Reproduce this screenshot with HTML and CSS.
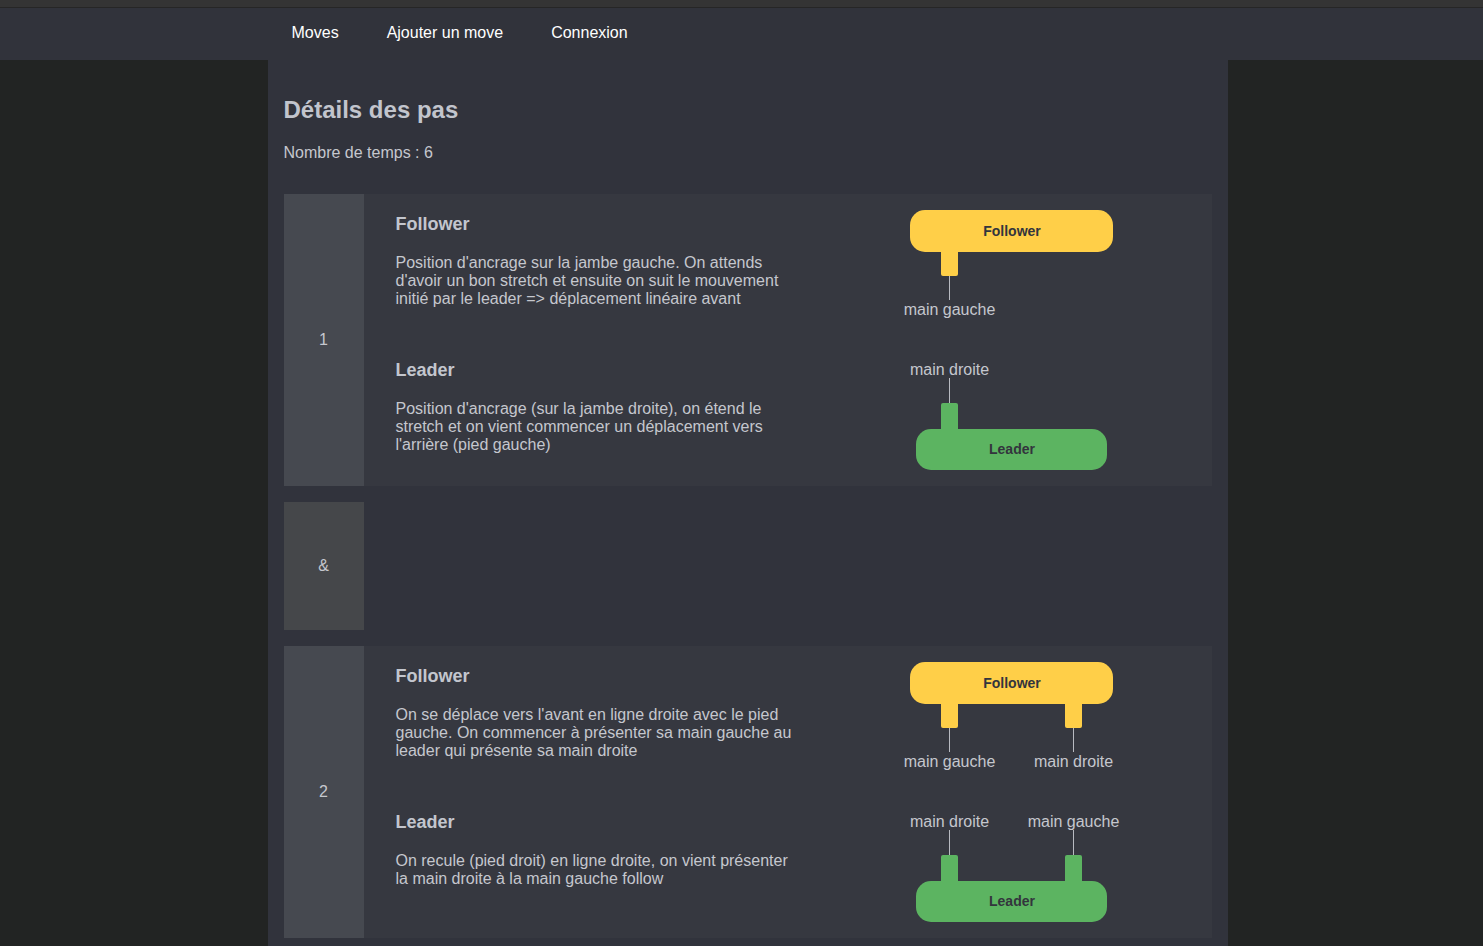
FILE: index.html
```html
<!DOCTYPE html>
<html lang="fr">
<head>
<meta charset="utf-8">
<title>Détails des pas</title>
<link rel="stylesheet" href="styles.css">
</head>
<body>
<div class="topstrip"></div>
<nav class="navbar">
  <div class="nav-inner">
    <a class="nav-link" href="#">Moves</a>
    <a class="nav-link" href="#">Ajouter un move</a>
    <a class="nav-link" href="#">Connexion</a>
  </div>
</nav>
<main class="container">
  <h1 class="title">Détails des pas</h1>
  <p class="count">Nombre de temps : 6</p>

  <div class="steps">
    <div class="step">
      <div class="step-num">1</div>
      <div class="step-body">
        <div class="role role-follower">
          <div class="role-text">
            <h3 class="role-title">Follower</h3>
            <p class="role-desc">Position d'ancrage sur la jambe gauche. On attends d'avoir un bon stretch et ensuite on suit le mouvement initié par le leader =&gt; déplacement linéaire avant</p>
          </div>
          <svg class="diagram diagram-follower" width="240" height="130" viewBox="0 0 240 130">
            <rect class="tab-f" x="45" y="30" width="17" height="36" rx="2"/>
            <rect class="pill-f" x="14" y="0" width="203" height="42" rx="15"/>
            <text class="pill-label" x="116" y="21">Follower</text>
            <line class="hand-line" x1="53.5" y1="66" x2="53.5" y2="90"/>
            <text class="hand-label" x="53.5" y="99">main gauche</text>
          </svg>
        </div>
        <div class="role role-leader">
          <div class="role-text">
            <h3 class="role-title">Leader</h3>
            <p class="role-desc">Position d'ancrage (sur la jambe droite), on étend le stretch et on vient commencer un déplacement vers l'arrière (pied gauche)</p>
          </div>
          <svg class="diagram diagram-leader" width="240" height="114" viewBox="0 0 240 114">
            <text class="hand-label" x="53.5" y="13">main droite</text>
            <line class="hand-line" x1="53.5" y1="22" x2="53.5" y2="47"/>
            <rect class="tab-l" x="45" y="47" width="17" height="38" rx="2"/>
            <rect class="pill-l" x="20" y="73" width="191" height="41" rx="15"/>
            <text class="pill-label" x="116" y="93">Leader</text>
          </svg>
        </div>
      </div>
    </div>

    <div class="step step-empty">
      <div class="step-num">&amp;</div>
      <div class="step-body"></div>
    </div>

    <div class="step">
      <div class="step-num">2</div>
      <div class="step-body">
        <div class="role role-follower">
          <div class="role-text">
            <h3 class="role-title">Follower</h3>
            <p class="role-desc">On se déplace vers l'avant en ligne droite avec le pied gauche. On commencer à présenter sa main gauche au leader qui présente sa main droite</p>
          </div>
          <svg class="diagram diagram-follower" width="240" height="130" viewBox="0 0 240 130">
            <rect class="tab-f" x="45" y="30" width="17" height="36" rx="2"/>
            <rect class="tab-f" x="169" y="30" width="17" height="36" rx="2"/>
            <rect class="pill-f" x="14" y="0" width="203" height="42" rx="15"/>
            <text class="pill-label" x="116" y="21">Follower</text>
            <line class="hand-line" x1="53.5" y1="66" x2="53.5" y2="90"/>
            <line class="hand-line" x1="177.5" y1="66" x2="177.5" y2="90"/>
            <text class="hand-label" x="53.5" y="99">main gauche</text>
            <text class="hand-label" x="177.5" y="99">main droite</text>
          </svg>
        </div>
        <div class="role role-leader">
          <div class="role-text">
            <h3 class="role-title">Leader</h3>
            <p class="role-desc">On recule (pied droit) en ligne droite, on vient présenter la main droite à la main gauche follow</p>
          </div>
          <svg class="diagram diagram-leader" width="240" height="114" viewBox="0 0 240 114">
            <text class="hand-label" x="53.5" y="13">main droite</text>
            <text class="hand-label" x="177.5" y="13">main gauche</text>
            <line class="hand-line" x1="53.5" y1="22" x2="53.5" y2="47"/>
            <line class="hand-line" x1="177.5" y1="22" x2="177.5" y2="47"/>
            <rect class="tab-l" x="45" y="47" width="17" height="38" rx="2"/>
            <rect class="tab-l" x="169" y="47" width="17" height="38" rx="2"/>
            <rect class="pill-l" x="20" y="73" width="191" height="41" rx="15"/>
            <text class="pill-label" x="116" y="93">Leader</text>
          </svg>
        </div>
      </div>
    </div>
  </div>
</main>
</body>
</html>
```
FILE: styles.css
```css
html, body {
  margin: 0;
  padding: 0;
}
body {
  background: #222423;
  font-family: "Liberation Sans", Arial, sans-serif;
  color: #c5c7ce;
  min-height: 946px;
}
.topstrip {
  height: 7px;
  background: #343434;
  border-bottom: 1px solid #262626;
}
.navbar {
  background: #31333b;
  height: 52px;
}
.nav-inner {
  width: 960px;
  margin-left: calc((100% - 960px) / 2 + 6px);
  display: flex;
  height: 52px;
  align-items: flex-start;
}
.nav-link {
  color: #ffffff;
  text-decoration: none;
  font-size: 16px;
  padding: 0 24px;
  line-height: 50px;
}
.container {
  width: 928px;
  margin-left: calc((100% - 960px) / 2 + 6px);
  background: #31333c;
  padding: 36px 16px 16px;
  min-height: 840px;
}
.title {
  margin: 0;
  font-size: 24px;
  line-height: 28px;
  font-weight: bold;
  color: #c2c5cd;
}
.count {
  margin: 20px 0 32px;
  font-size: 16px;
  line-height: 18px;
}
.steps {
  display: flex;
  flex-direction: column;
  gap: 16px;
}
.step {
  display: flex;
  background: #363840;
}
.step-num {
  width: 80px;
  flex: 0 0 80px;
  background: #464950;
  display: flex;
  align-items: center;
  justify-content: center;
  font-size: 16px;
}
.step-body {
  flex: 1;
  padding: 16px 32px;
  display: flex;
  flex-direction: column;
  gap: 16px;
}
.step-empty {
  background: transparent;
  height: 128px;
}
.step-empty .step-num {
  background: #45474a;
}
.role {
  display: flex;
  align-items: flex-start;
}
.role-text {
  width: 400px;
}
.role-title {
  margin: 0 0 17px;
  padding-top: 1px;
  font-size: 18px;
  line-height: 26px;
  font-weight: bold;
  color: #c3c6ce;
}
.role-desc {
  margin: 0;
  font-size: 16px;
  line-height: 18px;
}
.diagram {
  display: block;
  margin-left: 100px;
}
.pill-f, .tab-f {
  fill: #ffcf48;
}
.pill-l, .tab-l {
  fill: #5cb461;
}
.pill-label {
  font-family: "Liberation Sans", Arial, sans-serif;
  font-size: 14px;
  font-weight: bold;
  fill: #33353d;
  text-anchor: middle;
  dominant-baseline: central;
}
.hand-line {
  stroke: #b8bac1;
  stroke-width: 1;
}
.hand-label {
  font-family: "Liberation Sans", Arial, sans-serif;
  font-size: 16px;
  fill: #c5c7ce;
  text-anchor: middle;
  dominant-baseline: central;
}
```
